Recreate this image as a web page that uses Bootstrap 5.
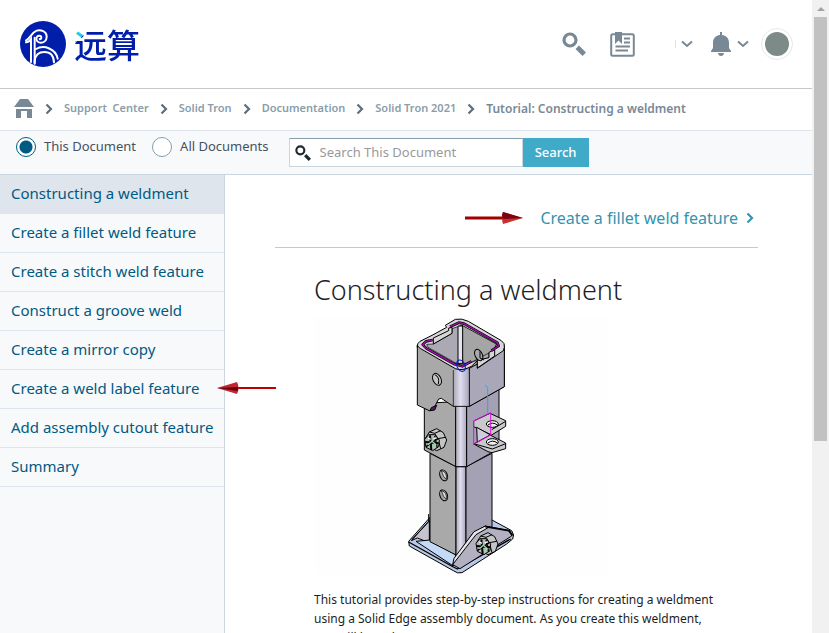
<!DOCTYPE html>
<html lang="en">
<head>
<meta charset="utf-8">
<meta name="viewport" content="width=device-width, initial-scale=1">
<title>Tutorial: Constructing a weldment</title>
<link rel="stylesheet" href="https://cdn.jsdelivr.net/npm/bootstrap@5.3.0/dist/css/bootstrap.min.css">
<style>
:root { --ink: #005a82; --slate: #788995; --rule: #c9d6e0; --teal: #40aac9; }
body { font-family: "Noto Sans", "Open Sans", sans-serif; font-size: 13px; color: #1e1e1e; }
a { text-decoration: none; }
.site-header { height: 89px; border-bottom: 1px solid #c8c8c8; padding: 0 19px 0 20px; }
.brand-name { font: 500 33px/48px "Noto Sans CJK SC", sans-serif; margin-left: 8px; color: transparent;
  background: linear-gradient(135deg, #18cfe8 0 17px, #001eaa 17px); -webkit-background-clip: text; background-clip: text; }
.tool { background: none; border: 0; padding: 0; line-height: 0; color: var(--slate); }
.tool.language { border-left: 1px solid #e4e4e4; padding-left: 5px; margin-left: 40px; }
.crumbs { height: 41px; padding: 0 14px 2px; font-size: 11px; font-weight: 600; gap: 11px; --bs-breadcrumb-divider: ""; }
.crumbs a { color: #8a9dab; }
.crumbs li { gap: 11px; white-space: nowrap; }
.crumbs .here { color: var(--slate); font-size: 12px; }
.search-row { height: 45px; background: #f8f9fb; border-top: 1px solid #dfe5ee; border-bottom: 1px solid var(--rule); padding: 7px 16px; }
.scope { gap: 8px; font-size: 13px; color: #44525e; height: 18px; }
.scope input { width: 20px; height: 20px; margin: 0; border: 1px solid #8a9dab; background-color: #fff; }
.scope input:checked { border-color: var(--ink); background: radial-gradient(circle, var(--ink) 6px, #fff 7px); }
.finder { width: 300px; height: 29px; }
.finder-box { background: #fff; border: 1px solid var(--rule); border-top-color: #8a9dab; padding: 0 5px; gap: 9px; }
.finder input { border: 0; outline: 0; font-size: 13px; min-width: 0; background: none; }
.finder input::placeholder { color: #999; }
.finder button { width: 66px; background: var(--teal); color: #fff; border: 0; font-size: 13px; font-weight: 500; }
.topics { width: 225px; background: #f8f9fb; border-right: 1px solid var(--rule); }
.topics a { display: block; height: 39px; line-height: 37px; padding-left: 11px; font-size: 15px; font-weight: 450; color: var(--ink); border-bottom: 1px solid #dfe5ee; white-space: nowrap; }
.topics a.current { background: #dfe5ed; }
.pointer-left { position: absolute; left: 217px; top: 6px; }
.article { padding: 0 54px 0 50px; }
.next-bar { height: 73px; padding: 14px 4px 0 0; border-bottom: 1px solid #c8c8c8; gap: 17px; }
.next-bar a { color: #3294b0; font-size: 16px; font-weight: 450; gap: 8px; }
.copy { padding: 0 38px 0 39px; }
.copy h1 { font-size: 27px; line-height: 36px; margin: 24px 0 8px; font-weight: 350; }
.copy svg { display: block; }
.copy p { font-size: 12px; line-height: 19px; margin: 15px 0 0; }
.scroll-track { width: 17px; background: #f1f1f1; }
.scroll-arrow { height: 17px; line-height: 0; padding-top: 7px; }
.scroll-thumb { height: 67%; margin: 0 2px; background: #c1c1c1; }
</style>
<script src="https://cdn.jsdelivr.net/npm/bootstrap@5.3.0/dist/js/bootstrap.bundle.min.js"></script>
</head>
<body class="vh-100 overflow-hidden d-flex">
<svg width="0" height="0" class="position-absolute" aria-hidden="true">
  <symbol id="next" viewBox="0 0 8 12"><path d="M1.5 1.500L6 6L1.500 10.500" fill="none" stroke="currentColor" stroke-width="2.200"/></symbol>
  <symbol id="down" viewBox="0 0 12 8"><path d="M1 1.500L6 6L11 1.500" fill="none" stroke="currentColor" stroke-width="2"/></symbol>
  <symbol id="lens" viewBox="0 0 24 24"><circle cx="8" cy="8" r="6" fill="none" stroke="currentColor" stroke-width="3.200"/><path d="M13.500 17L17 13.500L24 20.500L20.500 24Z" fill="currentColor"/></symbol>
</svg>
<div class="flex-grow-1 d-flex flex-column overflow-hidden">
  <header class="site-header d-flex align-items-center flex-shrink-0">
    <a href="#" class="d-flex align-items-center">
      <svg width="46" height="46" viewBox="0 0 138 138" aria-hidden="true">
        <circle cx="69" cy="69" r="69" fill="#001eaa"/>
        <g fill="none" stroke="#fff" stroke-linecap="round" stroke-width="6">
          <path d="M18 58C30 54 34 35 50 29C62 25 80 31 80 47C80 58 72 65 62 65C52 65 47 57 50 49C53 42 64 43 64 50C64 54 61 55 59 54"/>
          <path d="M18 64C27 63 30 59 33 54V123M44 50V126"/>
          <path d="M48 84C72 70 108 84 113 113M44 128V120C46 101 58 93 73 93C90 93 101 104 102 124"/>
        </g>
      </svg>
      <span class="brand-name">远算</span>
    </a>
    <div class="ms-auto d-flex align-items-center">
      <button class="tool" aria-label="Search"><svg width="24" height="24"><use href="#lens"/></svg></button>
      <button class="tool ms-4" aria-label="Bookmarks">
        <svg width="25" height="25" viewBox="0 0 25 25"><rect x="1.200" y="2.200" width="22.600" height="21.600" rx="1.500" fill="none" stroke="currentColor" stroke-width="2"/><path d="M5 0H12V12L8.500 8.500L5 12Z" fill="currentColor"/><path d="M14 6.500H20M14 10.500H20M5.500 14.500H20M5.500 18.500H18" stroke="currentColor" stroke-width="1.800"/></svg></button>
      <button class="tool language" aria-label="Language"><svg width="12" height="8"><use href="#down"/></svg></button>
      <button class="tool ms-3 d-flex align-items-center gap-1" aria-label="Notifications">
        <svg width="24" height="25" viewBox="0 0 24 25"><path d="M9 0H11V3C16 3.500 18 7 18 11V16L20 19V20H0V19L2 16V11C2 7 4 3.500 9 3ZM7 21H13C13 25 7 25 7 21Z" transform="translate(2 0)" fill="currentColor"/></svg>
        <svg width="12" height="8"><use href="#down"/></svg></button>
      <button class="tool ms-2 ps-1" aria-label="Account"><svg width="32" height="32"><circle cx="16" cy="16" r="15.500" fill="#fff" stroke="#e8e8e8"/><circle cx="16" cy="16" r="12" fill="#7c8b87"/></svg></button>
    </div>
  </header>
  <nav aria-label="breadcrumb">
    <ol class="crumbs breadcrumb m-0 flex-nowrap align-items-center">
      <li class="d-flex align-items-center"><a href="#" aria-label="Home"><svg width="20" height="20" viewBox="0 0 20 20"><path d="M6 0H14L20 8H0ZM2 10H18V19H13V12H7V19H2Z" fill="#788995"/></svg></a></li>
      <li class="d-flex align-items-center"><svg width="8" height="12" color="#5f6e79"><use href="#next"/></svg><a href="#">Support&nbsp; Center</a></li>
      <li class="d-flex align-items-center"><svg width="8" height="12" color="#5f6e79"><use href="#next"/></svg><a href="#">Solid Tron</a></li>
      <li class="d-flex align-items-center"><svg width="8" height="12" color="#5f6e79"><use href="#next"/></svg><a href="#">Documentation</a></li>
      <li class="d-flex align-items-center"><svg width="8" height="12" color="#5f6e79"><use href="#next"/></svg><a href="#">Solid Tron 2021</a></li>
      <li class="d-flex align-items-center here" aria-current="page"><svg width="8" height="12" color="#5f6e79"><use href="#next"/></svg>Tutorial: Constructing a weldment</li>
    </ol>
  </nav>
  <form class="search-row d-flex flex-shrink-0 gap-3">
    <label class="scope d-flex align-items-center"><input class="form-check-input" type="radio" name="scope" checked>This Document</label>
    <label class="scope d-flex align-items-center"><input class="form-check-input" type="radio" name="scope">All Documents</label>
    <div class="finder d-flex ms-1">
      <label class="finder-box flex-grow-1 d-flex align-items-center overflow-hidden">
        <svg class="flex-shrink-0" width="16" height="16" color="#1e2a30" aria-hidden="true"><use href="#lens"/></svg>
        <input class="flex-grow-1 p-0" type="text" placeholder="Search This Document" aria-label="Search This Document">
      </label>
      <button type="button">Search</button>
    </div>
  </form>
  <div class="flex-grow-1 d-flex overflow-hidden">
    <nav class="topics flex-shrink-0" aria-label="Topics">
      <a class="current" href="#">Constructing a weldment</a>
      <a href="#">Create a fillet weld feature</a>
      <a href="#">Create a stitch weld feature</a>
      <a href="#">Construct a groove weld</a>
      <a href="#">Create a mirror copy</a>
      <a href="#" class="position-relative">Create a weld label feature
        <svg class="pointer-left" width="60" height="24" viewBox="0 0 60 24" aria-hidden="true"><path d="M20 12H59" stroke="#c00000" stroke-width="2"/><path d="M0 12L20 6Q23 12 20 18Z" fill="#c1272d"/><path d="M0 12L21 11V15Z" fill="#6b0010"/></svg></a>
      <a href="#">Add assembly cutout feature</a>
      <a href="#">Summary</a>
    </nav>
    <main class="article flex-grow-1 overflow-hidden">
      <div class="next-bar d-flex justify-content-end align-items-center">
        <svg width="58" height="14" viewBox="0 0 58 14" aria-hidden="true"><path d="M0 7H40" stroke="#a00000" stroke-width="3"/><path d="M58 7L38 1Q36 7 38 13Z" fill="#c9302c"/><path d="M58 7L38 1Q36 5 38 8Z" fill="#7a0012"/></svg>
        <a href="#" class="d-flex align-items-center">Create a fillet weld feature<svg width="8" height="12"><use href="#next"/></svg></a>
      </div>
      <div class="copy">
        <h1>Constructing a weldment</h1>
        <svg width="294" height="259" viewBox="-258 18 882 777" role="img" aria-label="Weldment assembly">
          <defs>
            <linearGradient id="edge"><stop offset="0" stop-color="#aaa8b2"/><stop offset=".45" stop-color="#e0ddf0"/><stop offset="1" stop-color="#a7a4b8"/></linearGradient>
            <g id="bolt"><path d="M6 4L28 -6L48 6L58 28L50 50L28 60L4 48L-6 24Z" fill="#c4c6c6"/><path d="M6 4L22 8L40 0M22 8L32 24L54 20M32 24L40 54" fill="none"/><path d="M-8 26L4 12L22 12L36 28L34 48L16 60L-4 50Z" fill="#b4b8b8"/><path d="M-6 34L34 38M8 14L12 58" stroke-width="6"/><path d="M-4 48L32 24M22 16L30 52" stroke-width="4"/><path d="M2 42L14 32L26 42L18 52" fill="none" stroke="#8fe0a8" stroke-width="4"/><path d="M2 22L10 26M18 24L26 22" stroke="#fff" stroke-width="4"/></g>
          </defs>
          <rect x="-258" y="18" width="882" height="777" fill="#fefefe"/>
          <g stroke="#000" stroke-width="3" stroke-linejoin="round">
            <path d="M26 694L90 622V700L276 630L335 662Q345 675 338 687L320 702L186 788Q172 792 160 782L28 708Z" fill="#b8c8e6"/>
            <path d="M34 692L88 632V698L52 684Z" fill="#c5c3d0"/>
            <path d="M48 694L90 690L168 735L160 768Z" fill="#c5daf6"/>
            <path d="M26 696L160 771L172 777L332 687" fill="none" stroke-width="4"/>
            <path d="M86 612V635L36 688" fill="none"/>
            <path d="M90 430V695L168 735V470Z" fill="#a9a9aa"/>
            <path d="M168 470H198V710L168 738Z" fill="url(#edge)"/>
            <path d="M198 470L276 430V655L198 710Z" fill="#a4a1b4"/>
            <path d="M158 764L218 670L256 648L330 662L335 678L180 776Z" fill="#b3b0c2"/>
            <path d="M158 764L162 745L222 665L256 648L266 652L228 674Z" fill="#e6e6ea"/>
            <path d="M256 650L326 662L338 676" fill="none" stroke-width="5"/>
            <ellipse cx="131" cy="496" rx="11" ry="17" fill="#a0a0a5" transform="rotate(-22 131 496)"/><path d="M124 482Q142 486 139 508Q130 503 124 482Z" fill="#ddd" stroke-width="2"/>
            <ellipse cx="131" cy="556" rx="11" ry="17" fill="#a0a0a5" transform="rotate(-22 131 556)"/><path d="M124 542Q142 546 139 568Q130 563 124 542Z" fill="#ddd" stroke-width="2"/>
            <path d="M73 280V420L168 470V275Z" fill="#a9a9aa"/>
            <path d="M167 285H200V470H167Z" fill="url(#edge)"/>
            <path d="M200 290L297 235V415L200 470Z" fill="#a4a1b4"/>
            <path d="M52 105V285L90 303L105 288L116 267L124 265L160 289H208L313 230V105L190 35Z" fill="#a9a9aa"/>
            <path d="M208 175L313 118V230L208 289Z" fill="#aaa7b9"/>
            <path d="M160 180H208V289H160Z" fill="url(#edge)" stroke="none"/><path d="M160 180V289H208V175" fill="none" stroke-width="2"/>
            <path d="M52 112Q50 100 60 94L96 76L140 52L136 46L166 28Q185 24 205 34L304 92Q316 100 313 112L310 122L232 175V152L214 169Q188 184 166 176L62 116Q54 112 52 105Z" fill="#d8d8da"/>
            <path d="M80 103L100 102L156 70V56L185 46L290 102L282 119L267 127V144L230 151L208 160L181 163L165 158L84 112Z" fill="#abaab4" stroke-width="2"/>
            <path d="M186 46L289 102L282 119L265 130L208 160L188 160Z" fill="#a5a5a6" stroke-width="2"/>
            <path d="M174 48H188V160H174Z" fill="#e6e4f0"/>
            <path d="M100 84V102L156 70V52L146 54V62ZM232 174V151L267 143V127L284 119V138Z" fill="#d6d6d8"/>
            <path d="M98 90L78 94L68 104L80 116L164 163L187 169L214 154M150 50L176 38L192 41L292 98L296 108L274 122" fill="none" stroke-width="8"/>
            <path d="M98 90L78 94L68 104L80 116L164 163L187 169L214 154M150 50L176 38L192 41L292 98L296 108L274 122" fill="none" stroke="#a010a8" stroke-width="4"/>
            <ellipse cx="236" cy="135" rx="11" ry="18" fill="#aaa" transform="rotate(-25 236 135)"/><path d="M240 124V144L252 150" fill="none"/>
            <ellipse cx="111" cy="208" rx="12" ry="19" fill="#c4c4c6" transform="rotate(-25 111 208)"/><path d="M104 194Q120 200 115 222" fill="none"/>
            <path d="M90 302L94 293L110 286L104 300Z" fill="#5b1670"/>
            <ellipse cx="183" cy="167" rx="12" ry="18" fill="none" stroke="#0018e0" transform="rotate(-25 183 167)"/>
            <path d="M255 225L263 232V375" fill="none" stroke="#28a8ee"/>
            <path d="M221 333L270 310L317 332V349L275 375L221 350Z" fill="#c9c9cc"/>
            <path d="M230 352L270 374V380L232 402Z" fill="#cfcddd"/>
            <path d="M221 402L270 375L317 399V416L276 428L264 425Z" fill="#c9c9cc"/>
            <path d="M317 334L275 359M317 401L277 417L225 402" fill="none"/>
            <ellipse cx="277" cy="342" rx="18" ry="10" fill="#f0f0f0"/><path d="M264 345Q278 334 292 345" fill="none"/>
            <ellipse cx="277" cy="396" rx="18" ry="10" fill="#f0f0f0"/><path d="M264 399Q278 388 292 399" fill="none"/>
            <path d="M221 333L272 308V375L221 403Z" fill="none" stroke="#e010e0"/>
            <use href="#bolt" x="82" y="362"/><use href="#bolt" x="236" y="674"/>
          </g>
        </svg>
        <p>This tutorial provides step-by-step instructions for creating a weldment using a Solid Edge assembly document. As you create this weldment, you will learn how to:</p>
      </div>
    </main>
  </div>
</div>
<div class="scroll-track flex-shrink-0" aria-hidden="true">
  <div class="scroll-arrow text-center"><svg width="8" height="4"><path d="M0 4L4 0L8 4Z" fill="#a3a3a3"/></svg></div>
  <div class="scroll-thumb"></div>
</div>
</body>
</html>
